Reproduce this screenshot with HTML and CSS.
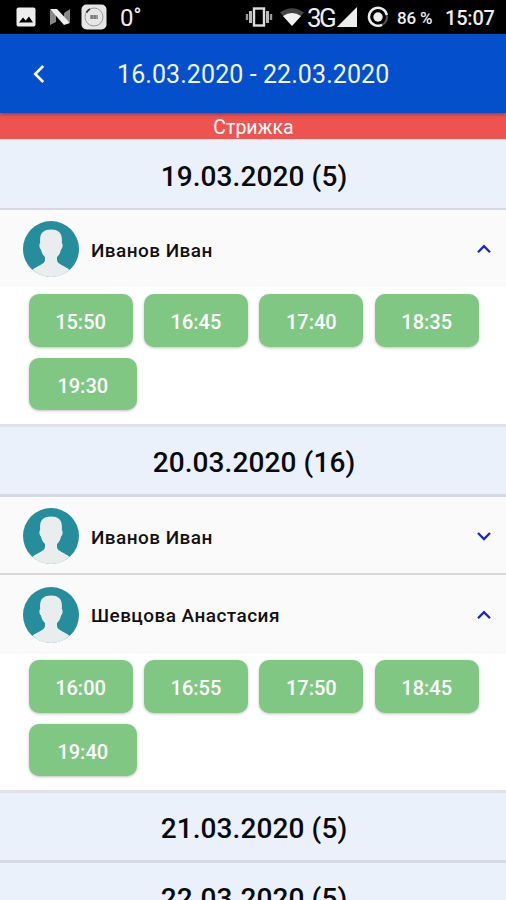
FILE: index.html
```html
<!DOCTYPE html>
<html lang="ru">
<head>
<meta charset="utf-8">
<title>16.03.2020 - 22.03.2020</title>
<link rel="stylesheet" href="styles.css">
</head>
<body>
<svg class="defs" width="0" height="0" aria-hidden="true">
  <symbol id="avatar" viewBox="0 0 56 56">
    <circle cx="28" cy="28" r="28" fill="#268d9c"/>
    <path d="M9.500 49C13 45 22 43.500 22 39V36C19.500 34 18.500 31 18 28.500C16 27 16 23 17.200 22C16.200 12.500 20 8.500 28 8.500S39.800 12.500 38.800 22C40 23 40 27 38 28.500C37.500 31 36.500 34 34 36V39C34 43.500 43 45 46.500 49A28 28 0 0 1 9.500 49Z" fill="#e9edee"/>
  </symbol>
  <symbol id="up" viewBox="0 0 16 16"><path d="M2 11.200L8 5.200L14 11.200" fill="none" stroke="#1428c4" stroke-width="2.300"/></symbol>
  <symbol id="down" viewBox="0 0 16 16"><path d="M2 5L8 11L14 5" fill="none" stroke="#1428c4" stroke-width="2.300"/></symbol>
</svg>

<div class="status">
  <svg class="i-image" width="20" height="20" viewBox="0 0 20 20"><rect x=".5" y=".5" width="19" height="19" rx="2" fill="#eee"/><path d="M3 15.500L7 10.500L9.700 13.500L13 9.500L17 15.500Z" fill="#000"/></svg>
  <svg class="i-n" width="22" height="18" viewBox="0 0 22 18"><path d="M1 2L7 6V14L1 17ZM15 5L21 1V14L15 12Z" fill="#888"/><path d="M1 1H8L21 15L15 17Z" fill="#eee"/></svg>
  <svg class="i-app" width="26" height="26" viewBox="0 0 26 26"><rect x=".5" y=".5" width="25" height="25" rx="5" fill="#e6e6e6"/><circle cx="13" cy="13" r="9" fill="none" stroke="#999" stroke-width="1"/><path d="M5.500 8.500A9 9 0 0 1 9 5" fill="none" stroke="#333" stroke-width="2"/><path d="M9 11H17V15H9Z" fill="#999"/><path d="M11 11V15M14 11V15" stroke="#666"/></svg>
  <span class="temp">0<span class="deg">°</span></span>
  <svg class="i-vib" width="28" height="20" viewBox="0 0 28 20"><rect x="9" y="1.500" width="10" height="17" fill="none" stroke="#ddd" stroke-width="2.400"/><path d="M5.500 4V16M22.500 4V16" stroke="#bbb" stroke-width="3"/><path d="M2 7V13M26 7V13" stroke="#999" stroke-width="2.400"/></svg>
  <svg class="i-wifi" width="24" height="18" viewBox="0 0 24 18"><path d="M0 4.500Q12-4 24 4.500L12 18Z" fill="#444"/><path d="M3 8Q12 2 21 8L12 18Z" fill="#f2f2f2"/></svg>
  <span class="net">3G</span>
  <svg class="i-signal" width="20" height="20" viewBox="0 0 20 20"><path d="M0 20L20 0V20Z" fill="#eee"/></svg>
  <svg class="i-ring" width="22" height="22" viewBox="0 0 22 22"><circle cx="11" cy="11" r="9" fill="none" stroke="#555" stroke-width="2"/><path d="M15 18.800A9 9 0 1 1 19.800 9" fill="none" stroke="#eee" stroke-width="2.500"/><circle cx="11" cy="11" r="4.700" fill="#eee"/></svg>
  <span class="battery">86 %</span>
  <span class="clock">15:07</span>
</div>

<header class="appbar">
  <svg class="back" width="16" height="20" viewBox="0 0 16 20"><path d="M12.200 2L4.200 10L12.200 18" fill="none" stroke="#fff" stroke-width="2.600"/></svg>
  <h1>16.03.2020 - 22.03.2020</h1>
</header>
<div class="service">Стрижка</div>

<main>
  <section>
    <h2 class="first">19.03.2020 (5)</h2>
    <div class="person"><svg class="avatar"><use href="#avatar"/></svg><span>Иванов Иван</span><svg class="chevron"><use href="#up"/></svg></div>
    <div class="slots"><button>15:50</button><button>16:45</button><button>17:40</button><button>18:35</button><button class="wide">19:30</button></div>
  </section>
  <section>
    <h2>20.03.2020 (16)</h2>
    <div class="person divided"><svg class="avatar"><use href="#avatar"/></svg><span>Иванов Иван</span><svg class="chevron"><use href="#down"/></svg></div>
    <div class="person"><svg class="avatar"><use href="#avatar"/></svg><span>Шевцова Анастасия</span><svg class="chevron"><use href="#up"/></svg></div>
    <div class="slots"><button>16:00</button><button>16:55</button><button>17:50</button><button>18:45</button><button class="wide">19:40</button></div>
  </section>
  <section><h2>21.03.2020 (5)</h2></section>
  <section><h2 class="joined">22.03.2020 (5)</h2></section>
</main>
</body>
</html>
```
FILE: styles.css
```css
* { box-sizing: border-box; }
body {
  margin: 0;
  width: 506px;
  height: 900px;
  overflow: hidden;
  display: flex;
  flex-direction: column;
  background: #fff;
  font-family: Roboto, "Liberation Sans", sans-serif;
}
.defs { position: absolute; }
.status {
  flex: none;
  height: 34px;
  display: flex;
  align-items: center;
  padding-left: 16px;
  background: #000;
  color: #eee;
  white-space: nowrap;
}
.status > * { flex: none; }
.i-n { margin-left: 13px; }
.i-app { margin-left: 10px; }
.temp { width: 24px; margin-left: 13px; padding-top: 2px; font-size: 24px; line-height: 28px; }
.deg { font-size: 20px; font-weight: 900; vertical-align: 4px; line-height: 0; }
.i-vib { margin-left: 101px; }
.i-wifi { margin-left: 7px; }
.net { width: 28px; margin-left: 3px; padding-top: 2px; font-size: 26px; letter-spacing: -2.5px; line-height: 28px; }
.i-signal { margin-left: 2px; }
.i-ring { margin-left: 10px; }
.battery { width: 36px; margin-left: 8px; padding-top: 2px; font-size: 17px; font-weight: 500; letter-spacing: -.2px; }
.clock { margin-left: 12px; padding-top: 2px; font-size: 20px; font-weight: 500; letter-spacing: -.2px; }
.appbar {
  flex: none;
  height: 79px;
  display: flex;
  align-items: center;
  padding-left: 31px;
  background: #044fcb;
  color: #f2f6ff;
  box-shadow: 0 1px 4px rgba(0, 0, 0, .4);
  z-index: 1;
}
.appbar h1 { margin: 3px 0 0 70px; font-size: 25px; line-height: 30px; font-weight: 400; letter-spacing: .08px; }
.service {
  flex: none;
  height: 26px;
  padding-left: 1px;
  background: #ef5350;
  color: #fff;
  text-align: center;
  font-size: 19.500px;
  line-height: 29px;
}
main { flex: 1; min-height: 0; }
h2 {
  margin: 0;
  height: 73px;
  padding-left: 2px;
  border-top: 3px solid #dfe2e8;
  border-bottom: 3px solid #d4d9e4;
  background: #eaf1fb;
  color: #080a0d;
  text-align: center;
  font-size: 28px;
  font-weight: 500;
  line-height: 71px;
  letter-spacing: .1px;
}
h2.first { height: 71px; border-top: 0; border-bottom-width: 2px; line-height: 75px; }
h2.joined { border-top: 0; height: 70px; }
.person {
  height: 77px;
  display: flex;
  align-items: center;
  padding: 1px 14px 0 23px;
  background: #fafafa;
  color: #111;
  font-size: 19px;
  font-weight: 500;
  letter-spacing: .45px;
}
.person.divided { height: 78px; padding-top: 2px; border-bottom: 2px solid #d8d8da; }
.person + .person { height: 79px; padding-top: 0; }
.avatar { width: 56px; height: 56px; margin-right: 12px; }
.person span { flex: 1; padding-top: 2px; }
.chevron { width: 16px; height: 16px; }
.slots {
  height: 137px;
  display: flex;
  flex-wrap: wrap;
  align-content: flex-start;
  gap: 11px 11.400px;
  padding: 7px 24px 0 28.500px;
  background: #fff;
}
.person + .person + .slots { height: 136px; padding-top: 6px; }
.slots button {
  width: 104px;
  height: 52.500px;
  padding: 4px 0 0;
  border: 0;
  border-radius: 10px;
  background: #81c784;
  box-shadow: 0 1px 3px rgba(0, 0, 0, .25);
  color: #fff;
  font-family: inherit;
  font-size: 20px;
  font-weight: 500;
}
.slots .wide { width: 108.500px; }
```
